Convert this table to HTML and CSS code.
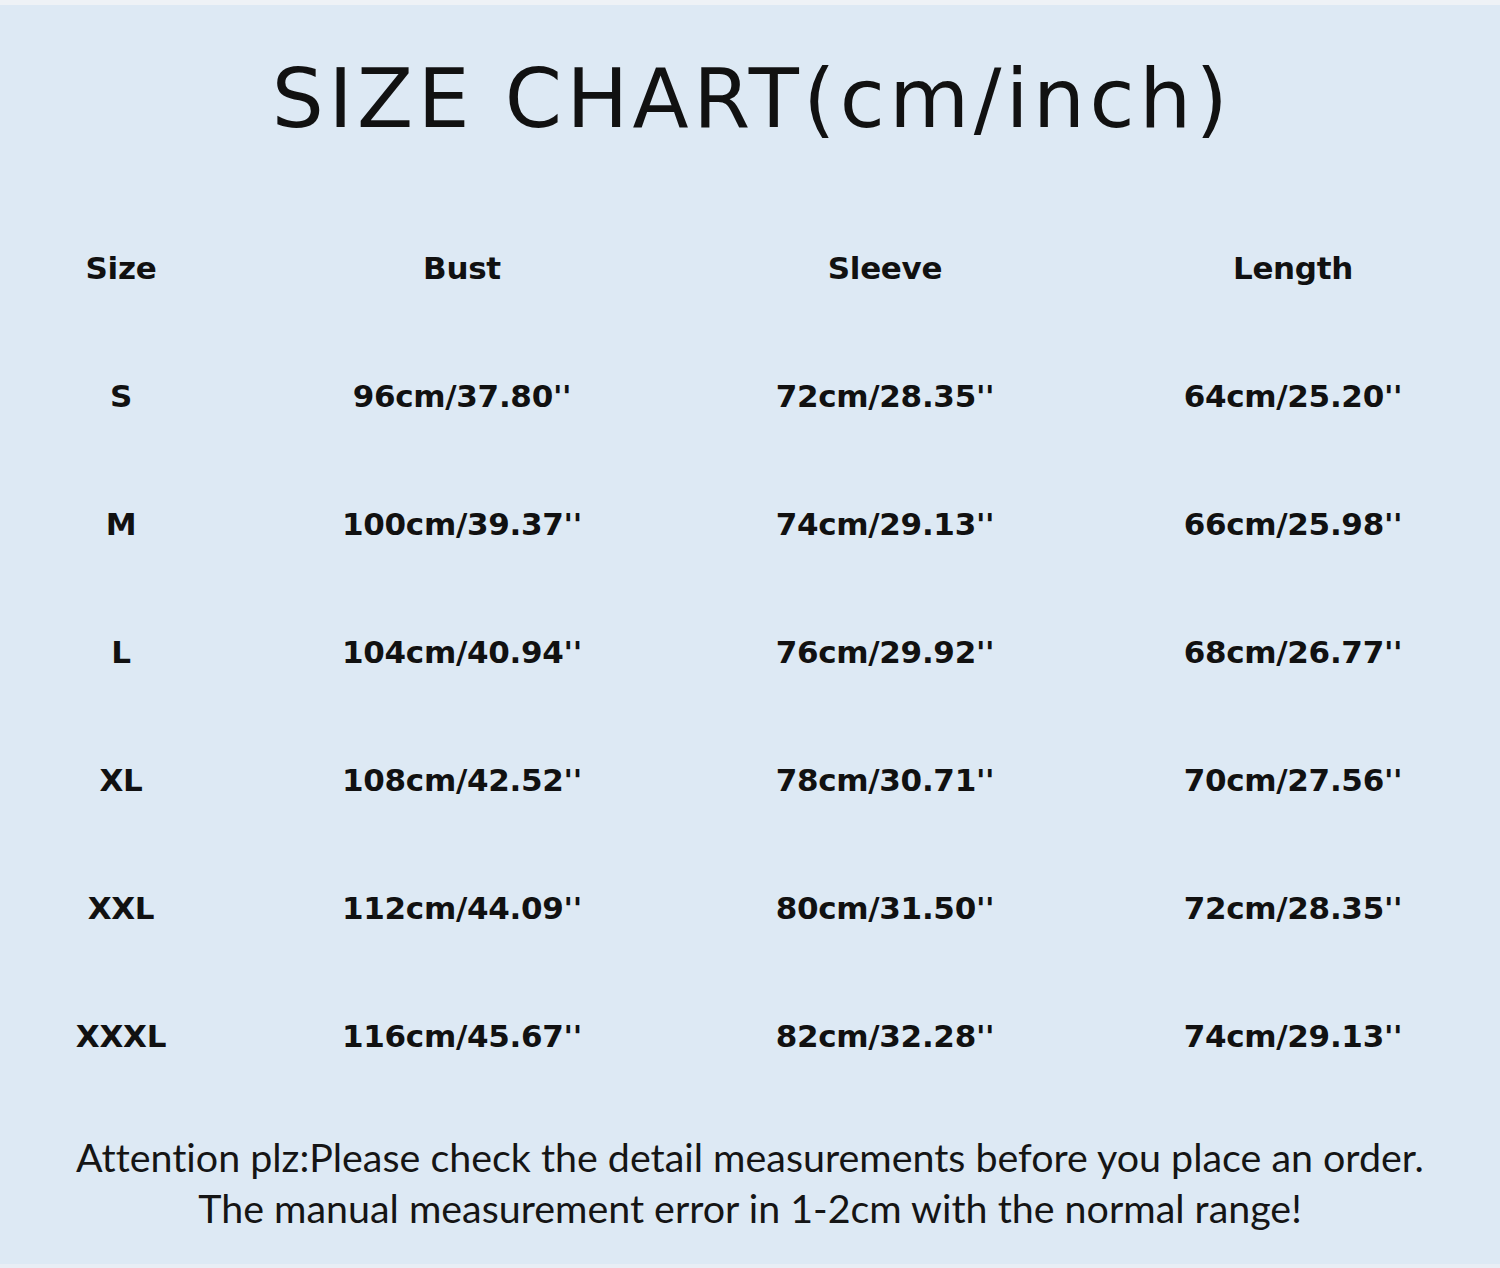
FILE: index.html
```html
<!DOCTYPE html>
<html lang="en">
<head>
<meta charset="utf-8">
<title>Size Chart</title>
<link rel="stylesheet" href="styles.css">
</head>
<body>
<main class="chart">
  <h1 class="title">SIZE CHART(cm/inch)</h1>
  <div class="table">
    <div class="cell head">Size</div><div class="cell head">Bust</div><div class="cell head">Sleeve</div><div class="cell head">Length</div>
    <div class="cell">S</div><div class="cell">96cm/37.80''</div><div class="cell">72cm/28.35''</div><div class="cell">64cm/25.20''</div>
    <div class="cell">M</div><div class="cell">100cm/39.37''</div><div class="cell">74cm/29.13''</div><div class="cell">66cm/25.98''</div>
    <div class="cell">L</div><div class="cell">104cm/40.94''</div><div class="cell">76cm/29.92''</div><div class="cell">68cm/26.77''</div>
    <div class="cell">XL</div><div class="cell">108cm/42.52''</div><div class="cell">78cm/30.71''</div><div class="cell">70cm/27.56''</div>
    <div class="cell">XXL</div><div class="cell">112cm/44.09''</div><div class="cell">80cm/31.50''</div><div class="cell">72cm/28.35''</div>
    <div class="cell">XXXL</div><div class="cell">116cm/45.67''</div><div class="cell">82cm/32.28''</div><div class="cell">74cm/29.13''</div>
  </div>
  <p class="note">Attention plz:Please check the detail measurements before you place an order.<br>The manual measurement error in 1-2cm with the normal range!</p>
</main>
</body>
</html>
```
FILE: styles.css
```css
html, body {
  margin: 0;
  padding: 0;
}
body {
  background: #dde9f4;
  width: 1500px;
  height: 1268px;
  overflow: hidden;
}
.chart {
  display: flex;
  flex-direction: column;
  height: 1268px;
  border-top: 5px solid #eef2f6;
  border-bottom: 4px solid #e8eef5;
  box-sizing: border-box;
}
.title {
  margin: 0;
  height: 199px;
  display: flex;
  align-items: flex-start;
  justify-content: center;
  padding-top: 44px;
  padding-left: 4px;
  box-sizing: border-box;
  font-family: "DejaVu Sans", sans-serif;
  font-weight: 400;
  font-size: 82px;
  line-height: 100px;
  color: #111;
  letter-spacing: 4.5px;
}
.table {
  display: grid;
  grid-template-columns: 242px 440px 406px 410px;
  grid-auto-rows: 128px;
}
.cell {
  display: flex;
  align-items: center;
  justify-content: center;
  font-family: "DejaVu Sans", sans-serif;
  font-weight: 700;
  font-size: 31px;
  letter-spacing: -0.3px;
  color: #111;
}
.note {
  margin: 0;
  padding-top: 31px;
  text-align: center;
  font-family: "Lato", sans-serif;
  font-variant-ligatures: none;
  font-size: 39.4px;
  line-height: 51px;
  color: #151515;
}
```
